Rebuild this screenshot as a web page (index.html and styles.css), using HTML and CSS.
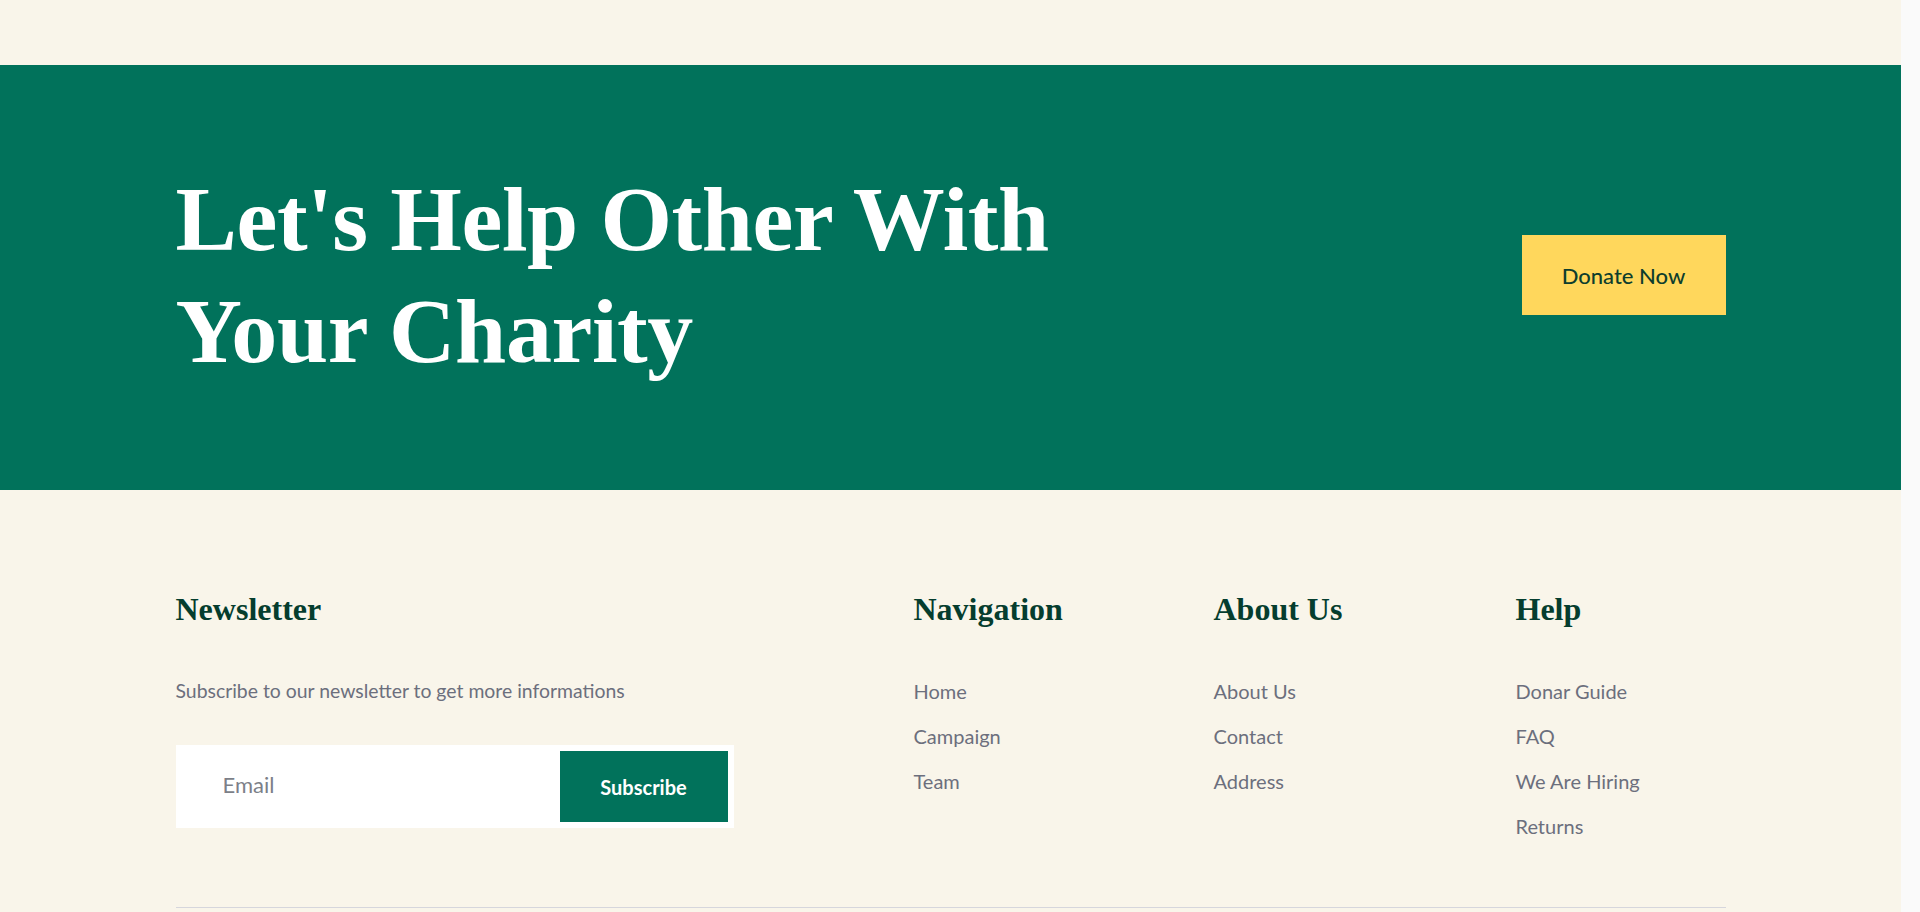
FILE: index.html
```html
<!DOCTYPE html>
<html lang="en">
<head>
<meta charset="utf-8">
<title>Charity</title>
<link rel="stylesheet" href="styles.css">
</head>
<body>
  <div class="top-space"></div>
  <section class="cta">
    <div class="container cta-inner">
      <h2 class="cta-title">Let's Help Other With<br>Your Charity</h2>
      <a class="btn-donate" href="#">Donate Now</a>
    </div>
  </section>
  <footer class="footer">
    <div class="container footer-grid">
      <div class="col col-news">
        <h4 class="col-title">Newsletter</h4>
        <p class="news-text">Subscribe to our newsletter to get more informations</p>
        <form class="news-form">
          <input class="news-input" type="email" placeholder="Email">
          <button class="news-btn" type="button">Subscribe</button>
        </form>
      </div>
      <div class="col">
        <h4 class="col-title">Navigation</h4>
        <ul class="links">
          <li><a href="#">Home</a></li>
          <li><a href="#">Campaign</a></li>
          <li><a href="#">Team</a></li>
        </ul>
      </div>
      <div class="col">
        <h4 class="col-title">About Us</h4>
        <ul class="links">
          <li><a href="#">About Us</a></li>
          <li><a href="#">Contact</a></li>
          <li><a href="#">Address</a></li>
        </ul>
      </div>
      <div class="col">
        <h4 class="col-title">Help</h4>
        <ul class="links">
          <li><a href="#">Donar Guide</a></li>
          <li><a href="#">FAQ</a></li>
          <li><a href="#">We Are Hiring</a></li>
          <li><a href="#">Returns</a></li>
        </ul>
      </div>
    </div>
    <div class="container">
      <div class="divider"></div>
    </div>
  </footer>
</body>
</html>
```
FILE: styles.css
```css
html {
  overflow-y: scroll;
  background: #fafafa;
}
body {
  margin: 0 19px 0 0;
  min-height: 912px;
  background: #f9f5ea;
  font-family: Lato, "Open Sans", sans-serif;
  color: #6c6f7d;
}
.container {
  width: 1550px;
  margin: 0 auto;
}
.top-space {
  height: 65px;
}
.cta {
  background: #01725b;
  padding: 98px 0 103px;
}
.cta-inner {
  display: flex;
  justify-content: space-between;
  align-items: center;
}
.cta-title {
  margin: 0;
  font-family: "Liberation Serif", serif;
  font-weight: 700;
  font-size: 92px;
  line-height: 112px;
  letter-spacing: -0.4px;
  color: #ffffff;
}
.btn-donate {
  display: flex;
  align-items: center;
  justify-content: center;
  width: 204px;
  height: 80px;
  background: #ffd75c;
  color: #0d3d2d;
  font-size: 22px;
  font-weight: 500;
  text-decoration: none;
}
.footer {
  padding-top: 100px;
}
.footer-grid {
  display: grid;
  grid-template-columns: 738px 300px 302px 1fr;
}
.col-title {
  margin: 0 0 48px;
  font-family: "Liberation Serif", serif;
  font-weight: 700;
  font-size: 32px;
  line-height: 38px;
  color: #053d2e;
}
.news-text {
  margin: 0;
  font-size: 19.4px;
  line-height: 30px;
}
.news-form {
  display: flex;
  width: 558px;
  height: 83px;
  box-sizing: border-box;
  margin-top: 39px;
  padding: 6px;
  background: #ffffff;
}
.news-input {
  flex: 1;
  min-width: 0;
  border: 0;
  outline: 0;
  padding: 0 0 4px 41px;
  background: transparent;
  font-family: Lato, sans-serif;
  font-size: 22px;
  color: #7c7f88;
}
.news-input::placeholder {
  color: #7c7f88;
}
.news-btn {
  width: 168px;
  border: 0;
  background: #01725b;
  color: #ffffff;
  font-family: Lato, sans-serif;
  font-size: 20px;
  font-weight: 700;
  padding: 0;
}
.links {
  list-style: none;
  margin: 0;
  padding: 0;
  display: flex;
  flex-direction: column;
  gap: 15px;
}
.links a {
  display: block;
  font-size: 20px;
  line-height: 30px;
  color: #6c6f7d;
  text-decoration: none;
}
.divider {
  margin-top: 66px;
  height: 1px;
  background: #d6d6dc;
}
```
